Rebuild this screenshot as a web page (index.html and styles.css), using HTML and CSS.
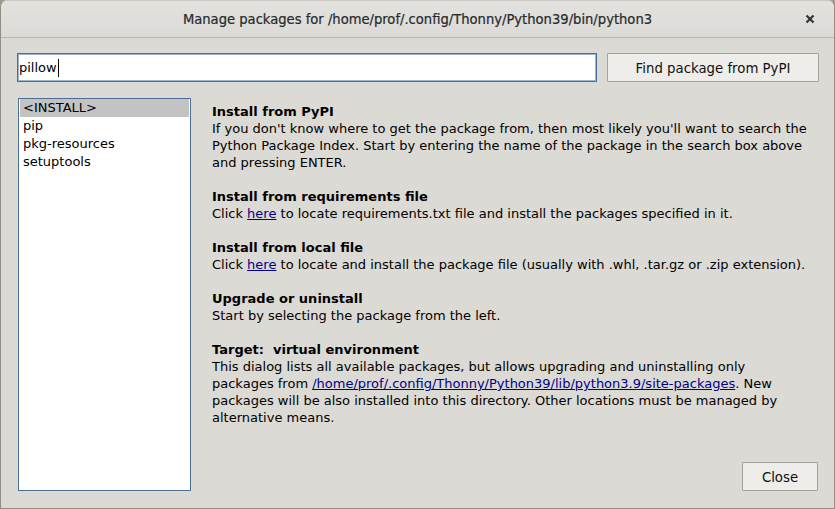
FILE: index.html
```html
<!DOCTYPE html>
<html>
<head>
<meta charset="utf-8">
<link rel="stylesheet" href="styles.css">
</head>
<body>
<div class="window">
  <div class="titlebar">
    <span class="title">Manage packages for /home/prof/.config/Thonny/Python39/bin/python3</span>
    <svg class="close-x" width="10" height="10" viewBox="0 0 10 10"><path d="M1.5 1.5 L8.5 8.5 M8.5 1.5 L1.5 8.5" stroke="#2e3436" stroke-width="2.2" fill="none"/></svg>
  </div>
  <div class="content">
    <div class="search-row">
      <div class="entry">pillow<span class="caret"></span></div>
      <div class="btn find-btn">Find package from PyPI</div>
    </div>
    <div class="main">
      <div class="listbox">
        <div class="item selected">&lt;INSTALL&gt;</div>
        <div class="item">pip</div>
        <div class="item">pkg-resources</div>
        <div class="item">setuptools</div>
      </div>
      <div class="info">
        <div class="section">
          <div class="heading">Install from PyPI</div>
          <div class="line">If you don't know where to get the package from, then most likely you'll want to search the</div>
          <div class="line">Python Package Index. Start by entering the name of the package in the search box above</div>
          <div class="line">and pressing ENTER.</div>
        </div>
        <div class="section">
          <div class="heading">Install from requirements file</div>
          <div class="line">Click <a class="link">here</a> to locate requirements.txt file and install the packages specified in it.</div>
        </div>
        <div class="section">
          <div class="heading">Install from local file</div>
          <div class="line">Click <a class="link">here</a> to locate and install the package file (usually with .whl, .tar.gz or .zip extension).</div>
        </div>
        <div class="section">
          <div class="heading">Upgrade or uninstall</div>
          <div class="line">Start by selecting the package from the left.</div>
        </div>
        <div class="section">
          <div class="heading">Target:&nbsp; virtual environment</div>
          <div class="line">This dialog lists all available packages, but allows upgrading and uninstalling only</div>
          <div class="line">packages from <a class="link">/home/prof/.config/Thonny/Python39/lib/python3.9/site-packages</a>. New</div>
          <div class="line">packages will be also installed into this directory. Other locations must be managed by</div>
          <div class="line">alternative means.</div>
        </div>
        <div class="footer">
          <div class="btn close-btn">Close</div>
        </div>
      </div>
    </div>
  </div>
</div>
</body>
</html>
```

FILE: styles.css
```css
* { box-sizing: border-box; }
html, body {
  margin: 0;
  padding: 0;
  background: #9a9a8c;
}
body {
  width: 835px;
  height: 509px;
  overflow: hidden;
  font-family: "DejaVu Sans", sans-serif;
  font-size: 13px;
  color: #000;
}
.window {
  width: 835px;
  height: 509px;
  background: #dcdad5;
  border-left: 1px solid #8f8f84;
  border-right: 1px solid #8f8f84;
  border-bottom: 1px solid #8f8f84;
  border-top: 1px solid #c9c7c2;
  border-radius: 7px 7px 0 0;
  display: flex;
  flex-direction: column;
  overflow: hidden;
}
.titlebar {
  height: 37px;
  flex: none;
  background: linear-gradient(#e4e2de, #dcdad6);
  border-bottom: 1px solid #b9b7b1;
  display: flex;
  align-items: center;
  justify-content: center;
  position: relative;
}
.title {
  font-family: "DejaVu Sans Condensed", "DejaVu Sans", sans-serif;
  font-size: 14.6px;
  color: #262a2c;
  margin-top: -1px;
  -webkit-text-stroke: 0.2px #262a2c;
}
.close-x {
  position: absolute;
  right: 19px;
  top: 13px;
}
.content {
  flex: 1;
  display: flex;
  flex-direction: column;
  padding: 15px 15px 17px 16px;
}
.search-row {
  display: flex;
  gap: 10px;
  height: 29px;
}
.entry {
  width: 580px;
  height: 29px;
  background: #fff;
  border: 1px solid #4a6e96;
  box-shadow: inset 0 0 0 1px #9bb3cc;
  padding: 5px 0 0 1px;
  line-height: 17px;
  font-size: 13px;
  display: flex;
  align-items: flex-start;
}
.caret {
  display: inline-block;
  width: 1px;
  height: 18px;
  background: #000;
  margin-left: 1px;
}
.btn {
  background: #eeedea;
  border: 1px solid #a3a29c;
  border-radius: 1px;
  display: flex;
  align-items: center;
  justify-content: center;
  font-size: 13.3px;
  color: #111;
}
.find-btn {
  width: 212px;
  height: 29px;
  padding-top: 2px;
}
.main {
  display: flex;
  margin-top: 16px;
  flex: 1;
}
.listbox {
  width: 173px;
  height: 393px;
  margin-left: 1px;
  background: #fff;
  border: 1px solid #4a6e96;
  padding: 0 1px;
  flex: none;
}
.item {
  height: 18px;
  line-height: 18px;
  padding-left: 3px;
  font-size: 13px;
}
.item.selected {
  background: #c3c3c3;
}
.info {
  flex: 1;
  padding-left: 21px;
  display: flex;
  flex-direction: column;
  padding-top: 5px;
}
.section {
  margin-bottom: 17px;
}
.heading {
  font-weight: bold;
  line-height: 17px;
  white-space: nowrap;
}
.line {
  line-height: 17px;
  white-space: nowrap;
}
.link {
  color: #00008b;
  text-decoration: underline;
}
.footer {
  margin-top: auto;
  display: flex;
  justify-content: flex-end;
}
.close-btn {
  width: 76px;
  height: 29px;
  margin-right: 1px;
  padding-top: 2px;
}
```
